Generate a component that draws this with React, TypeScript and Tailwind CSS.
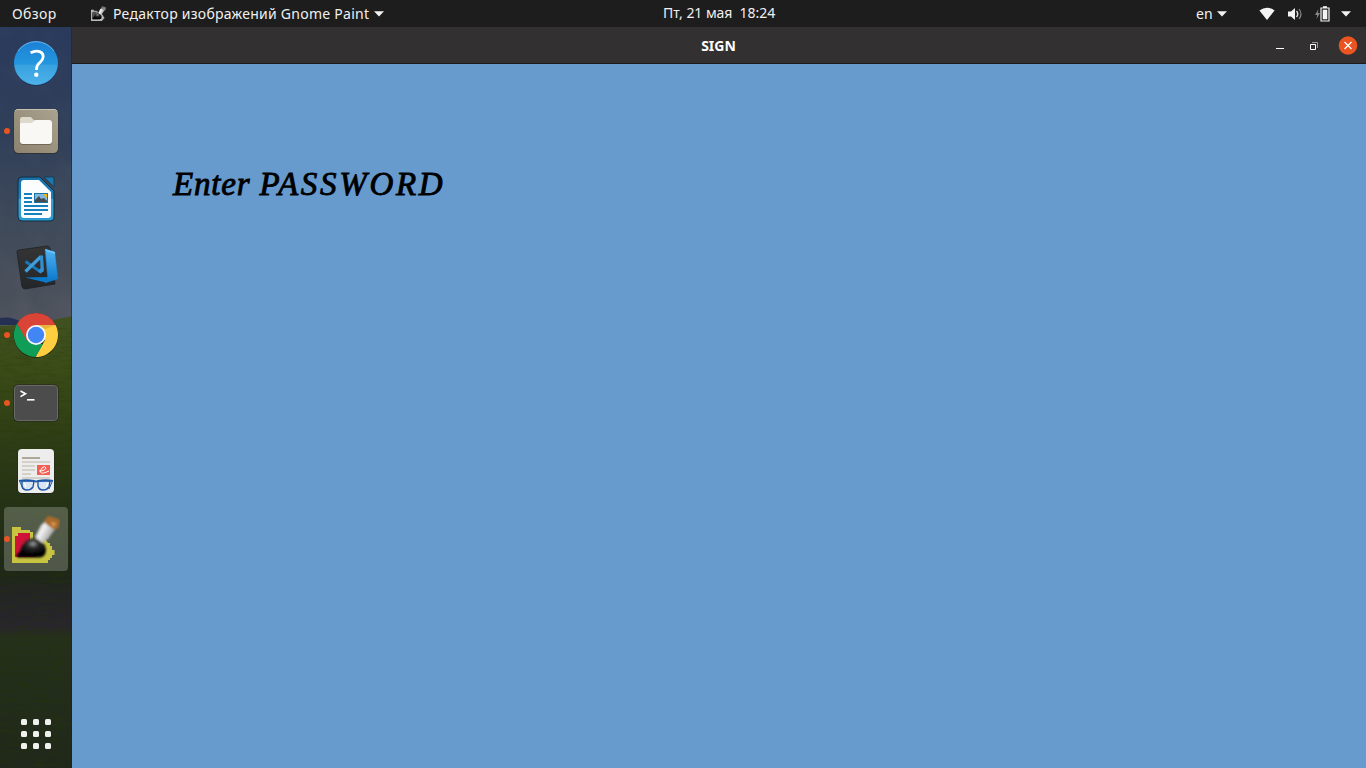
import type { ReactNode } from "react";

function Caret() {
  return (
    <svg width="10" height="6" viewBox="0 0 10 6" className="shrink-0">
      <path d="M0 .2H10L5 5.5Z" fill="#f2f2f2" />
    </svg>
  );
}

function PaintArt({ size, mono = false }: { size: number; mono?: boolean }) {
  const id = mono ? "pm" : "pc";
  return (
    <svg width={size} height={size} viewBox="0 0 48 48" className="shrink-0">
      <defs>
        <linearGradient id={id + "w"} x1="0" y1="0" x2="1" y2="0.6">
          <stop offset="0" stopColor="#8d918d" />
          <stop offset=".45" stopColor="#f2f2f2" />
          <stop offset="1" stopColor="#8b8b8b" />
        </linearGradient>
        <radialGradient id={id + "b"} cx=".55" cy=".3" r=".5">
          <stop offset="0" stopColor="#a0a0a0" />
          <stop offset=".4" stopColor="#2c2c2c" />
          <stop offset="1" stopColor="#060606" />
        </radialGradient>
        <filter id={id + "f"} x="-20%" y="-20%" width="140%" height="140%"><feGaussianBlur stdDeviation=".8" /></filter>
      </defs>
      <path d="M0 12H9V15H18V17H21V24H33L36 28H38V31H40V35H42.500V40H40V43H38V45H36V48H0Z" fill={mono ? "#b8b8b8" : "#c8c442"} />
      <path d="M6 18H18V26H24V42H3V21H6Z" fill={mono ? "#505050" : "#cf1238"} />
      <g filter={"url(#" + id + "f)"}>
        <path d="M5 42.500V39Q9 37 9 33Q13 24 22 23Q33 26 34 34Q34 42 28 42.500Z" fill={"url(#" + id + "b)"} />
        <path d="M23 22L29 10L34 6L44 13L36 24L30 28Z" fill={"url(#" + id + "w)"} />
        <path d="M32 6L36 1Q42 2 48 5L47 12L43 15L34 9Z" fill={mono ? "#777" : "#a96a2c"} />
        <path d="M38 7L44 8L42 12Z" fill={mono ? "#aaa" : "#dc9c55"} />
      </g>
    </svg>
  );
}

function HelpIcon() {
  return (
    <svg width="48" height="48" viewBox="0 0 48 48">
      <defs>
        <linearGradient id="help" x1="0" y1="0" x2="0" y2="1">
          <stop offset="0" stopColor="#1b80d6" />
          <stop offset=".53" stopColor="#2497df" />
          <stop offset=".54" stopColor="#38a1df" />
          <stop offset="1" stopColor="#4db2ea" />
        </linearGradient>
      </defs>
      <circle cx="24" cy="24.8" r="22" fill="#183353" />
      <circle cx="24" cy="24" r="22" fill="url(#help)" />
      <path d="M6 12A22 22 0 0 1 42 12" fill="none" stroke="#79bceb" strokeWidth=".8" />
      <path d="M18.600 13.800Q23.500 11.100 27.600 12.600Q31.300 14 31.200 17.700Q31.100 20.600 27.900 23.500Q24.500 26.100 24.500 30V31" fill="none" stroke="white" strokeWidth="2.8" />
      <circle cx="24.3" cy="35.8" r="2.200" fill="white" />
    </svg>
  );
}

function FilesIcon() {
  return (
    <svg width="48" height="48" viewBox="0 0 48 48">
      <defs>
        <linearGradient id="files" x1="0" y1="1" x2="1" y2="0">
          <stop stopColor="#8d826e" /><stop offset="1" stopColor="#aaa38f" />
        </linearGradient>
      </defs>
      <rect x="1.5" y="2" width="45" height="45" rx="5" fill="#303137" />
      <rect x="2" y="2" width="44" height="44" rx="4.5" fill="url(#files)" />
      <path d="M3 4Q4 2.500 6 2.500H42Q44 2.500 45 4" fill="none" stroke="#c8c1b0" />
      <path d="M8 13Q8 10 11 10H19L23 14H37Q40 14 40 17V35Q40 38 37 38H11Q8 38 8 35Z" fill="#6f6858" />
      <path d="M8 12Q8 10 10 10H19L23 14V18H8Z" fill="#dedacb" />
      <path d="M8 17Q8 16 10 16H20L23 13H37Q40 13 40 16V34Q40 37 37 37H11Q8 37 8 34Z" fill="#f9f8f5" />
    </svg>
  );
}

function WriterIcon() {
  return (
    <svg width="48" height="48" viewBox="0 0 48 48">
      <defs>
        <linearGradient id="writer" x1="0" y1="0" x2="0" y2="1">
          <stop stopColor="#176fa9" /><stop offset=".5" stopColor="#1c83bd" /><stop offset=".51" stopColor="#3ba3d0" /><stop offset="1" stopColor="#289ace" />
        </linearGradient>
      </defs>
      <path d="M10 2H28L42 16V43Q42 46 38 46H10Q6 46 6 42V6Q6 2 10 2Z" fill="url(#writer)" stroke="#152c40" />
      <path d="M9 8Q9 5 12 5H27L39 17V40Q39 43 36 43H12Q9 43 9 40Z" fill="#fcfdff" />
      <path d="M32 2H42V12Z" fill="#1b78ad" stroke="#173c57" />
      <path d="M12 19H20M12 23H20M12 27H20M12 31H36M12 35H36M12 39H30" stroke="#1681bd" strokeWidth="2" />
      <rect x="22.5" y="18.5" width="13" height="9" fill="#80b7dc" stroke="#1875a8" />
      <path d="M31 19H35V23Z" fill="#f6b800" />
      <path d="M23 27V25L27 21L29 24L32 23L35 26V27Z" fill="#474b4e" />
    </svg>
  );
}

function CodeIcon() {
  return (
    <svg width="48" height="48" viewBox="0 0 48 48">
      <defs>
        <linearGradient id="code" x1="0" y1="0" x2="0" y2="1"><stop stopColor="#50b2f2" /><stop offset="1" stopColor="#0876cb" /></linearGradient>
        <linearGradient id="codebg" x1="0" y1="0" x2="0" y2="1"><stop stopColor="#353536" /><stop offset="1" stopColor="#252629" /></linearGradient>
      </defs>
      <path d="M7 7L35 3Q37 3 38 5L43 41L13 46Q11 46 10 44L5 9Q5 7 7 7Z" fill="url(#codebg)" stroke="#202226" strokeWidth=".8" />
      <path d="M13 34.500L36 34L34 39.500Z" fill="#087bce" />
      <path d="M13.500 18.500L28 28.500" stroke="#1976b8" strokeWidth="2.8" />
      <path d="M13.500 28.500L29 13.500" stroke="#3d9ddd" strokeWidth="3.2" />
      <path d="M28 12.500L31 12.500L32 28L28.500 30.500L26 28.500L28.500 25Z" fill="#3190d2" />
      <path d="M33 6L43 9L46 36L33 40L35.500 34Z" fill="url(#code)" stroke="#1e6ca8" strokeWidth=".4" />
      <path d="M33 6L43 9L43 11L34 8Z" fill="#65c4ff" />
    </svg>
  );
}

function ChromeIcon() {
  return (
    <svg width="48" height="48" viewBox="0 0 48 48">
      <circle cx="24" cy="24.5" r="22.3" fill="#172211" />
      <path d="M24 14H43.600A22 22 0 0 1 23.500 46L33 29Z" fill="#ffcd40" />
      <path d="M14 27L24 33L31 33L23.500 46A22 22 0 0 1 5 12.700Z" fill="#109d58" />
      <path d="M24 14H43.600A22 22 0 0 0 5 12.700L14.500 29Z" fill="#da4437" />
      <path d="M24 14H43.600L33.500 18Z" fill="#b4882a" opacity=".35" />
      <circle cx="24" cy="24" r="10" fill="#f5f7fa" />
      <circle cx="24" cy="24" r="8.2" fill="#4285f4" />
    </svg>
  );
}

function TerminalIcon() {
  return (
    <svg width="48" height="48" viewBox="0 0 48 48">
      <rect x="1.500" y="5.5" width="45" height="37" rx="4.5" fill="#202020" />
      <rect x="2.5" y="6.5" width="43" height="35" rx="3.5" fill="#4c4c4c" stroke="#686868" />
      <path d="M8.500 12L13.500 14.800L8.500 17.600" fill="none" stroke="white" strokeWidth="1.6" />
      <path d="M15 20.800H22.500" stroke="white" strokeWidth="1.6" />
    </svg>
  );
}

function ReaderIcon() {
  return (
    <svg width="48" height="48" viewBox="0 0 48 48">
      <rect x="5.5" y="2" width="37" height="45" rx="5" fill="#1d2718" />
      <rect x="6" y="2" width="36" height="44" rx="4" fill="#ededed" />
      <path d="M10 11H28" stroke="#ada898" strokeWidth="2" />
      <path d="M10 15H38M10 19H23M10 23H23M10 27H19M10 31H38" stroke="#cbc7bc" strokeWidth="1.7" />
      <rect x="25" y="18" width="13" height="10" fill="#f55f53" />
      <path d="M27 24Q33 24 34 21Q33 18 30 21Q26 27 32 26L37 24" fill="none" stroke="white" strokeWidth="1" />
      <path d="M10 34H22L21 40Q19 43 15 43Q11 43 10 39ZM26 34H38L37 40Q35 43 31 43Q27 43 26 39Z" fill="#dbe4f2" stroke="#1e58a6" strokeWidth="1.4" />
      <path d="M7 34Q14 32.500 22 34Q24 35 26 34Q34 32.500 41 34" fill="none" stroke="#1e58a6" strokeWidth="1.8" />
      <path d="M11 42L8 35M37 42L40 35" stroke="#1e58a6" strokeWidth="1" />
      <path d="M12 36L14 40M36 36L34 40" stroke="white" strokeWidth="1.3" />
    </svg>
  );
}

function Slot({ children, running = false }: { children: ReactNode; running?: boolean }) {
  return (
    <div className="relative flex h-[68px] w-[72px] shrink-0 items-center justify-center">
      {children}
      {running && <span className="absolute top-[31px] left-[4px] size-[6px] rounded-full bg-[#e95420]" />}
    </div>
  );
}

function Landscape() {
  return (
    <svg className="absolute inset-0" width="72" height="741" viewBox="0 27 72 741">
      <defs>
        <linearGradient id="sky" x1="0" y1="0" x2="0" y2="1">
          <stop stopColor="#2a3a5c" /><stop offset=".35" stopColor="#303f59" /><stop offset=".6" stopColor="#3c4859" /><stop offset=".9" stopColor="#4a505a" /><stop offset="1" stopColor="#515562" />
        </linearGradient>
        <linearGradient id="field" x1="0" y1="0" x2="0" y2="1">
          <stop stopColor="#415121" /><stop offset=".12" stopColor="#3b4c18" /><stop offset=".28" stopColor="#2e3d16" /><stop offset=".48" stopColor="#222d18" /><stop offset=".57" stopColor="#1e2718" /><stop offset=".62" stopColor="#232426" /><stop offset=".685" stopColor="#28252d" /><stop offset=".71" stopColor="#25301b" /><stop offset="1" stopColor="#20281b" />
        </linearGradient>
        <filter id="clouds" x="0" y="0" width="100%" height="100%">
          <feTurbulence type="fractalNoise" baseFrequency=".035 .025" numOctaves="3" seed="4" />
          <feColorMatrix values="0 0 0 0 .5  0 0 0 0 .5  0 0 0 0 .55  1.2 0 0 0 -.5" />
        </filter>
        <filter id="grass" x="0" y="0" width="100%" height="100%">
          <feTurbulence type="fractalNoise" baseFrequency=".06 .3" numOctaves="3" seed="2" />
          <feColorMatrix values="0 0 0 0 .02  0 0 0 0 .04  0 0 0 0 0  1.8 0 0 0 -.75" />
        </filter>
      </defs>
      <path d="M0 27H72V330H0Z" fill="url(#sky)" />
      <path d="M0 27H72V330H0Z" filter="url(#clouds)" opacity=".08" />
      <path d="M0 318Q12 316 21 322L39 325H0Z" fill="#263052" />
      <path d="M0 326Q30 325 72 316V768H0Z" fill="url(#field)" />
      <rect y="328" width="72" height="440" filter="url(#grass)" opacity=".4" />
      <path d="M71.500 27V768" stroke="#172033" opacity=".55" />
    </svg>
  );
}

function TopBar() {
  return (
    <header className="grid h-[27px] shrink-0 grid-cols-[628px_182px_1fr] bg-[#1d1d1d] font-['Noto_Sans','Open_Sans',sans-serif] text-[14px] leading-[27px] whitespace-nowrap text-[#f0f0f0]">
      <div className="flex items-center pl-[12px]">
        <span className="w-[79px] tracking-[0.4px]">Обзор</span>
        <PaintArt size={15} mono />
        <span className="ml-[7px] w-[257px] tracking-[0.26px]">Редактор изображений Gnome Paint</span>
        <span className="ml-[4px]"><Caret /></span>
      </div>
      <div className="-mt-px pl-[35px] tracking-[-0.05px] whitespace-pre">Пт, 21 мая  18:24</div>
      <div className="flex items-center pl-[386px]">
        <span className="w-[21px]">en</span><Caret />
        <svg className="ml-[32px]" width="16" height="14" viewBox="0 0 16 14"><path d="M.4 3.500Q8-2.200 15.600 3.500L8 13Z" fill="#f4f4f4" /></svg>
        <svg className="ml-[12px]" width="16" height="14" viewBox="0 0 16 14">
          <path d="M1 4.500H4L8 1V13L4 9.500H1Z" fill="#f4f4f4" />
          <path d="M9.500 4Q12 7 9.500 10" fill="none" stroke="#ddd" strokeWidth="1.4" /><path d="M12 2Q16 7 12 12" fill="none" stroke="#888" strokeWidth="1.2" />
        </svg>
        <svg className="ml-[12px]" width="15" height="16" viewBox="0 0 15 16">
          <path d="M3.500 3L0 9H2.200L1.500 13L5 7H2.800Z" fill="#888" />
          <path d="M8 .2H12V2H8Z" fill="#f4f4f4" />
          <path d="M6 2H14V15H6Z" fill="none" stroke="#f4f4f4" strokeWidth="1.2" />
          <path d="M7.700 3.700H12.300V13.300H7.700Z" fill="#f4f4f4" />
        </svg>
        <span className="ml-[11px]"><Caret /></span>
      </div>
    </header>
  );
}

export default function App() {
  return (
    <div className="flex h-[768px] w-[1366px] flex-col overflow-hidden bg-[#6699cc]">
      <TopBar />
      <div className="flex min-h-0 flex-1">
        <aside className="relative w-[72px] shrink-0 overflow-hidden">
          <Landscape />
          <div className="relative flex h-full flex-col pt-[2px]">
            <Slot><HelpIcon /></Slot>
            <Slot running><FilesIcon /></Slot>
            <Slot><WriterIcon /></Slot>
            <Slot><CodeIcon /></Slot>
            <Slot running><ChromeIcon /></Slot>
            <Slot running><TerminalIcon /></Slot>
            <Slot><ReaderIcon /></Slot>
            <Slot running>
              <div className="flex size-[64px] items-center justify-center rounded-[4px] bg-white/22"><PaintArt size={48} /></div>
            </Slot>
            <div className="mt-auto mb-[19px] ml-[21px] grid w-[30px] grid-cols-3 gap-[6px]">
              {Array.from({ length: 9 }, (_, i) => <span key={i} className="size-[6px] rounded-[1.5px] bg-[#f0f0ee]" />)}
            </div>
          </div>
        </aside>
        <section className="flex min-w-0 flex-1 flex-col">
          <div className="grid h-[37px] shrink-0 grid-cols-[1fr_36px_1fr] border-b border-[#1b1b1d] bg-[#323031]">
            <span />
            <h1 className="-ml-px text-center font-['Noto_Sans','Open_Sans',sans-serif] text-[14px] leading-[37px] font-bold text-white">SIGN</h1>
            <div className="flex items-center justify-end pr-[8px]">
              <svg width="8" height="10" viewBox="0 0 8 10"><path d="M0 7.500H8" stroke="white" /></svg>
              <svg className="ml-[26px]" width="8" height="8" viewBox="0 0 8 8"><path d="M.5 2.500H5.500V7.500H.5Z" fill="none" stroke="white" /><path d="M2 .5H7.500V6" fill="none" stroke="#999" /></svg>
              <svg className="ml-[20px]" width="20" height="20" viewBox="0 0 20 20"><circle cx="10" cy="9.5" r="9.3" fill="#e95420" /><path d="M6.500 6L13.500 13M13.500 6L6.500 13" stroke="white" strokeWidth="1.3" /></svg>
            </div>
          </div>
          <main className="flex-1 bg-[#679acd] pt-[102px] pl-[101px]">
            <p className="w-[290px] font-['Liberation_Serif',serif] text-[33px] leading-[36px] whitespace-nowrap text-black italic [-webkit-text-stroke:0.9px_black]">
              <span className="tracking-[0.8px]">Enter </span>
              <span className="tracking-[2.7px]">PASSWORD</span>
            </p>
          </main>
        </section>
      </div>
    </div>
  );
}
